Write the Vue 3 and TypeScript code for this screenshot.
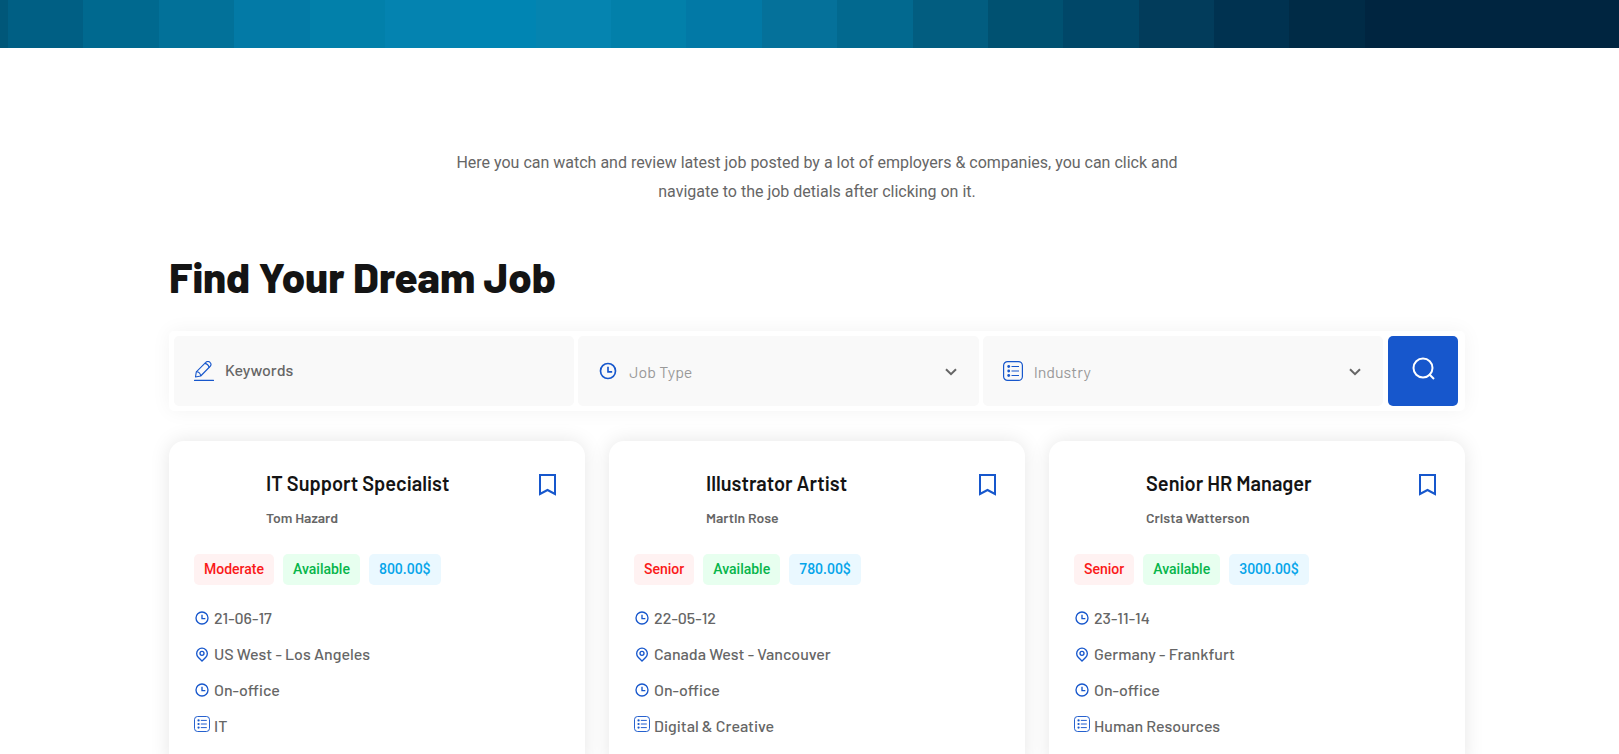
<script setup lang="ts">
import { ref } from 'vue'

interface Band { color: string; weight: number }
interface Job {
  title: string
  poster: string
  level: string
  salary: string
  date: string
  place: string
  mode: string
  industry: string
}

const bandColors = [
  '#005f84', '#00698f', '#027199', '#037aa6', '#0280aa', '#0483b0', '#0085b3', '#0584b0', '#0280aa',
  '#0279a6', '#05719a', '#02698f', '#025d80', '#005171', '#004768', '#023c5b', '#003250', '#002b46',
]
const bands: Band[] = [
  { color: '#005779', weight: 8 },
  ...bandColors.map((color) => ({ color, weight: 75 })),
  { color: '#002540', weight: 253 },
]

const jobs: Job[] = [
  { title: 'IT Support Specialist', poster: 'Tom Hazard', level: 'Moderate', salary: '800.00$', date: '21-06-17', place: 'US West - Los Angeles', mode: 'On-office', industry: 'IT' },
  { title: 'Illustrator Artist', poster: 'Martin Rose', level: 'Senior', salary: '780.00$', date: '22-05-12', place: 'Canada West - Vancouver', mode: 'On-office', industry: 'Digital & Creative' },
  { title: 'Senior HR Manager', poster: 'Crista Watterson', level: 'Senior', salary: '3000.00$', date: '23-11-14', place: 'Germany - Frankfurt', mode: 'On-office', industry: 'Human Resources' },
]

const keywords = ref('')
const jobType = ref('')
const industry = ref('')
</script>

<template>
  <svg class="sprite" aria-hidden="true">
    <symbol id="clock" viewBox="0 0 24 24">
      <g fill="none" stroke="currentColor" stroke-width="2">
        <circle cx="12" cy="12" r="9" />
        <path d="M12 7v6h5" />
      </g>
    </symbol>
    <symbol id="pin" viewBox="0 0 24 24">
      <g fill="none" stroke="currentColor" stroke-width="2">
        <path d="M12 22.5l-5.7-5.7a8 8 0 1 1 11.4 0z" />
        <circle cx="12" cy="11" r="3" />
      </g>
    </symbol>
    <symbol id="list" viewBox="0 0 20 20">
      <rect x="0.6" y="0.6" width="18.8" height="18.8" rx="4" fill="none" stroke="currentColor" stroke-width="1.2" />
      <path d="M8.5 5.5h7.5M8.5 10h7.5M8.5 14.5h7.5" stroke="currentColor" stroke-width="1.2" />
      <circle cx="5.7" cy="5.5" r="1.4" fill="currentColor" />
      <circle cx="5.7" cy="10" r="1.4" fill="currentColor" />
      <circle cx="5.7" cy="14.5" r="1.4" fill="currentColor" />
    </symbol>
    <symbol id="pencil" viewBox="0 0 20 20">
      <g fill="none" stroke="currentColor" stroke-width="1.1" stroke-linejoin="round">
        <path d="M1.5 16l.8-5.2L11.8 1.4a2.9 2.9 0 0 1 4.2 0 2.9 2.9 0 0 1 0 4.1L6.7 15z" />
        <path d="M2.3 10.8q3.9 0 4.4 4.2M10.8 2.4q3.6.6 4.2 4.1" />
        <path d="M0.5 19.4h19" stroke-linecap="round" />
      </g>
    </symbol>
    <symbol id="chevron" viewBox="0 0 12 8">
      <path d="M1 1.2l5 5 5-5" fill="none" stroke="currentColor" stroke-width="2" />
    </symbol>
    <symbol id="search" viewBox="0 0 24 24">
      <g fill="none" stroke="currentColor" stroke-width="2">
        <circle cx="12" cy="12" r="9.5" />
        <path d="M18 18l5 5" />
      </g>
    </symbol>
    <symbol id="bookmark" viewBox="0 0 24 24">
      <path d="M4 3h15v19L11.500 18 4 22z" fill="none" stroke="currentColor" stroke-width="2" />
    </symbol>
  </svg>

  <div class="banner">
    <div v-for="(band, i) in bands" :key="i" :style="{ flexGrow: band.weight, background: band.color }"></div>
  </div>

  <main class="page">
    <p class="intro">
      Here you can watch and review latest job posted by a lot of employers &amp; companies, you can click and
      navigate to the job detials after clicking on it.
    </p>
    <h1>Find Your Dream Job</h1>

    <form class="search" @submit.prevent>
      <label class="field">
        <svg class="lead"><use href="#pencil" /></svg>
        <input v-model="keywords" type="text" placeholder="Keywords" aria-label="Keywords" />
      </label>
      <label class="field">
        <svg class="lead"><use href="#clock" /></svg>
        <select v-model="jobType" aria-label="Job Type">
          <option value="">Job Type</option>
        </select>
        <svg class="chevron"><use href="#chevron" /></svg>
      </label>
      <label class="field">
        <svg class="lead"><use href="#list" /></svg>
        <select v-model="industry" aria-label="Industry">
          <option value="">Industry</option>
        </select>
        <svg class="chevron"><use href="#chevron" /></svg>
      </label>
      <button class="go" type="submit" aria-label="Search">
        <svg><use href="#search" /></svg>
      </button>
    </form>

    <section class="cards">
      <article v-for="job in jobs" :key="job.title" class="card">
        <header>
          <div class="who">
            <h2>{{ job.title }}</h2>
            <p>{{ job.poster }}</p>
          </div>
          <button class="save" type="button" aria-label="Bookmark">
            <svg><use href="#bookmark" /></svg>
          </button>
        </header>
        <div class="tags">
          <span class="tag level">{{ job.level }}</span>
          <span class="tag status">Available</span>
          <span class="tag pay">{{ job.salary }}</span>
        </div>
        <ul>
          <li><svg><use href="#clock" /></svg>{{ job.date }}</li>
          <li><svg><use href="#pin" /></svg>{{ job.place }}</li>
          <li><svg><use href="#clock" /></svg>{{ job.mode }}</li>
          <li><svg class="raised"><use href="#list" /></svg>{{ job.industry }}</li>
        </ul>
      </article>
    </section>
  </main>
</template>

<style>
html {
  scrollbar-width: none;
}
body {
  margin: 0;
  background: #fff;
}
</style>

<style scoped>
.sprite {
  position: absolute;
  width: 0;
  height: 0;
}
.banner {
  display: flex;
  height: 48px;
}
.page {
  max-width: 1296px;
  margin: 0 auto;
  padding: 100px 0 30px 15px;
  font-family: Barlow, Roboto, sans-serif;
  color: #666;
}
.intro {
  max-width: 760px;
  margin: 0 auto;
  text-align: center;
  font: 400 16px/29px Roboto, sans-serif;
}
h1 {
  margin: 45px 0 29px;
  font-size: 42px;
  line-height: 51px;
  font-weight: 800;
  color: #141414;
}
.search {
  display: grid;
  grid-template-columns: repeat(3, 1fr) 71px;
  gap: 4px;
  padding: 5px 7px 5px 5px;
  border-radius: 5px;
  background: #fff;
  box-shadow: 0 0 20px rgba(0, 0, 0, 0.05);
}
.field {
  position: relative;
  display: flex;
  align-items: center;
  gap: 11px;
  height: 70px;
  padding: 0 20px;
  box-sizing: border-box;
  border-radius: 5px;
  background: #f9f9f9;
}
.lead {
  flex: none;
  width: 20px;
  height: 20px;
  color: #1757cc;
}
.field input,
.field select {
  flex: 1;
  min-width: 0;
  height: 100%;
  box-sizing: border-box;
  padding: 0;
  border: 0;
  outline: 0;
  background: transparent;
  appearance: none;
  font: 500 16px/24px Barlow, Roboto, sans-serif;
  color: #666;
}
.field input {
  padding-bottom: 3px;
}
.field select {
  padding-top: 1px;
  font-weight: 400;
  color: #999;
}
.field input::placeholder {
  color: #666;
  opacity: 1;
}
.chevron {
  position: absolute;
  right: 22px;
  top: 32px;
  width: 12px;
  height: 8px;
  color: #666;
  pointer-events: none;
}
.go {
  display: flex;
  align-items: center;
  justify-content: center;
  margin-left: 1px;
  padding: 0 0 6px;
  border: 0;
  border-radius: 5px;
  background: #1757cc;
  color: #fff;
}
.go svg {
  width: 24px;
  height: 24px;
}
.cards {
  display: grid;
  grid-template-columns: repeat(3, 1fr);
  gap: 24px;
  margin-top: 30px;
}
.card {
  padding: 25px;
  border-radius: 15px;
  background: #fff;
  box-shadow: 0 0 20px rgba(0, 0, 0, 0.1);
}
.card header {
  display: flex;
  justify-content: space-between;
  align-items: flex-start;
  padding-left: 72px;
}
h2 {
  margin: 0;
  font-size: 20px;
  line-height: 34px;
  font-weight: 600;
  color: #141414;
}
.who p {
  margin: 6px 0 0;
  font-size: 14px;
  line-height: 24px;
  font-weight: 600;
}
.save {
  padding: 6px 0 0;
  border: 0;
  background: none;
  color: #1757cc;
}
.save svg {
  display: block;
  width: 24px;
  height: 24px;
}
.tags {
  display: flex;
  gap: 9px;
  margin-top: 24px;
}
.tag {
  padding: 0 10px;
  border-radius: 5px;
  font: 500 14px/31px Roboto, sans-serif;
}
.level {
  background: #fff2f2;
  color: #fa1919;
}
.status {
  background: #e7ffef;
  color: #06b54a;
}
.pay {
  background: #eaf8ff;
  color: #06a5ea;
}
ul {
  margin: 15px 0 0;
  padding: 0;
  list-style: none;
}
li {
  display: flex;
  align-items: center;
  gap: 4px;
  font-size: 16px;
  line-height: 36px;
  font-weight: 500;
}
li svg {
  width: 16px;
  height: 16px;
  color: #1757cc;
}
.raised {
  margin-bottom: 4px;
}
</style>
